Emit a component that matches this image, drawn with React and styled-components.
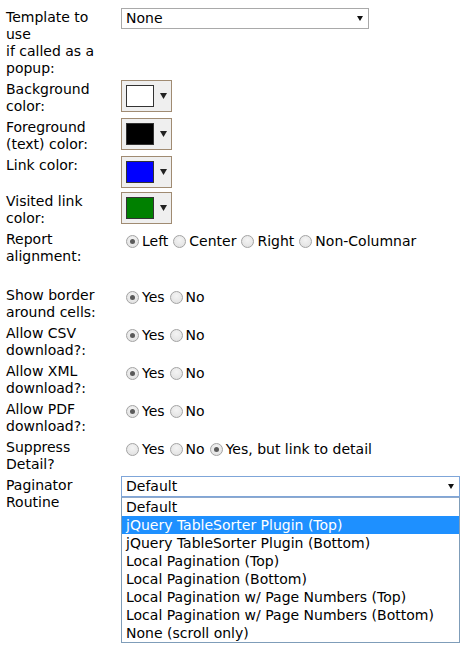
import React from 'react';
import styled, { createGlobalStyle } from 'styled-components';

const Global = createGlobalStyle`
  html, body { margin: 0; padding: 0; background: #ffffff; }
  body {
    font-family: "DejaVu Sans", Verdana, sans-serif;
    font-size: 14px;
    line-height: 17px;
    color: #000000;
  }
`;

const Form = styled.div`
  box-sizing: border-box;
  min-height: 647px;
  display: flex;
  flex-direction: column;
  gap: 4px;
  padding: 8px 0 0 6px;
`;

const Row = styled.div`
  display: grid;
  grid-template-columns: 110px 1fr;
  column-gap: 5px;
  align-items: start;
  margin-bottom: ${(p) => p.$spaceAfter || 0}px;
`;

const Label = styled.div`
  padding-top: 1px;
  margin-bottom: -1px;
`;

const Value = styled.div`
  position: relative;
`;

const SelectBox = styled.div`
  box-sizing: border-box;
  width: ${(p) => p.$width}px;
  height: 21px;
  border: 1px solid ${(p) => (p.$focused ? '#7fa6d9' : '#a9a9a9')};
  background: #ffffff;
  display: flex;
  align-items: center;
  justify-content: space-between;
  padding: 0 5px 0 4px;
  white-space: nowrap;
`;

const Caret = styled.svg`
  display: block;
  flex: none;
`;

const OptionList = styled.ul`
  position: absolute;
  left: 0;
  top: 21px;
  width: 339px;
  box-sizing: border-box;
  margin: 0;
  padding: 0;
  list-style: none;
  border: 1px solid #7f9db9;
  border-top-color: #8fa9cc;
  background: #ffffff;
  z-index: 2;
`;

const Option = styled.li`
  height: 18px;
  line-height: 18px;
  padding-left: 4px;
  white-space: nowrap;
  background: ${(p) => (p.$active ? '#1e90ff' : 'transparent')};
  color: ${(p) => (p.$active ? '#ffffff' : '#000000')};
`;

const ColorButton = styled.div`
  box-sizing: border-box;
  width: 51px;
  height: 32px;
  border: 1px solid #a08b72;
  background: #efefef;
  display: flex;
  align-items: center;
  padding: 0 0 0 4px;
  gap: 6px;
`;

const Swatch = styled.div`
  box-sizing: border-box;
  width: 28px;
  height: 22px;
  border: 1px solid #333333;
  background: ${(p) => p.$color};
`;

const RadioGroup = styled.div`
  display: flex;
  align-items: center;
  height: 17px;
  padding-top: 3px;
  white-space: nowrap;
`;

const RadioLabel = styled.label`
  display: inline-flex;
  align-items: center;
`;

const Radio = styled.input.attrs({ type: 'radio', readOnly: true })`
  appearance: none;
  -webkit-appearance: none;
  box-sizing: border-box;
  width: 13px;
  height: 13px;
  margin: 0 3px 0 5px;
  border-radius: 50%;
  border: 1px solid #a3a3a3;
  background: radial-gradient(circle at 50% 35%, #f4f4f4 0%, #dedede 100%);
  position: relative;
  flex: none;
  &:checked::after {
    content: '';
    position: absolute;
    left: 3px;
    top: 3px;
    width: 5px;
    height: 5px;
    border-radius: 50%;
    background: #5a5a5a;
  }
`;

const Arrow = ({ w = 7, h = 6, color = '#111' }) => (
  <Caret width={w} height={h} viewBox={`0 0 ${w} ${h}`}>
    <polygon points={`0,0 ${w},0 ${w / 2},${h}`} fill={color} />
  </Caret>
);

const ColorPicker = ({ color }) => (
  <ColorButton>
    <Swatch $color={color} />
    <Arrow w={7} h={6} color="#222" />
  </ColorButton>
);

const RadioSet = ({ name, options, checked }) => (
  <RadioGroup>
    {options.map((o, i) => (
      <RadioLabel key={o}>
        <Radio name={name} defaultChecked={i === checked} />
        {o}
      </RadioLabel>
    ))}
  </RadioGroup>
);

const paginatorOptions = [
  'Default',
  'jQuery TableSorter Plugin (Top)',
  'jQuery TableSorter Plugin (Bottom)',
  'Local Pagination (Top)',
  'Local Pagination (Bottom)',
  'Local Pagination w/ Page Numbers (Top)',
  'Local Pagination w/ Page Numbers (Bottom)',
  'None (scroll only)',
];

export default function App() {
  return (
    <>
      <Global />
      <Form>
        <Row>
          <Label>Template to use<br />if called as a popup:</Label>
          <Value>
            <SelectBox $width={248}>
              <span>None</span>
              <Arrow w={6} h={5} />
            </SelectBox>
          </Value>
        </Row>
        <Row>
          <Label>Background color:</Label>
          <Value><ColorPicker color="#ffffff" /></Value>
        </Row>
        <Row>
          <Label>Foreground (text) color:</Label>
          <Value><ColorPicker color="#000000" /></Value>
        </Row>
        <Row>
          <Label>Link color:</Label>
          <Value><ColorPicker color="#0000ff" /></Value>
        </Row>
        <Row>
          <Label>Visited link color:</Label>
          <Value><ColorPicker color="#008000" /></Value>
        </Row>
        <Row $spaceAfter={18}>
          <Label>Report alignment:</Label>
          <Value>
            <RadioSet name="align" options={['Left', 'Center', 'Right', 'Non-Columnar']} checked={0} />
          </Value>
        </Row>
        <Row>
          <Label>Show border around cells:</Label>
          <Value><RadioSet name="border" options={['Yes', 'No']} checked={0} /></Value>
        </Row>
        <Row>
          <Label>Allow CSV download?:</Label>
          <Value><RadioSet name="csv" options={['Yes', 'No']} checked={0} /></Value>
        </Row>
        <Row>
          <Label>Allow XML download?:</Label>
          <Value><RadioSet name="xml" options={['Yes', 'No']} checked={0} /></Value>
        </Row>
        <Row>
          <Label>Allow PDF download?:</Label>
          <Value><RadioSet name="pdf" options={['Yes', 'No']} checked={0} /></Value>
        </Row>
        <Row>
          <Label>Suppress Detail?</Label>
          <Value>
            <RadioSet name="suppress" options={['Yes', 'No', 'Yes, but link to detail']} checked={2} />
          </Value>
        </Row>
        <Row>
          <Label>Paginator Routine</Label>
          <Value>
            <SelectBox $width={339} $focused>
              <span>Default</span>
              <Arrow w={6} h={5} />
            </SelectBox>
            <OptionList>
              {paginatorOptions.map((o, i) => (
                <Option key={o} $active={i === 1}>{o}</Option>
              ))}
            </OptionList>
          </Value>
        </Row>
      </Form>
    </>
  );
}
